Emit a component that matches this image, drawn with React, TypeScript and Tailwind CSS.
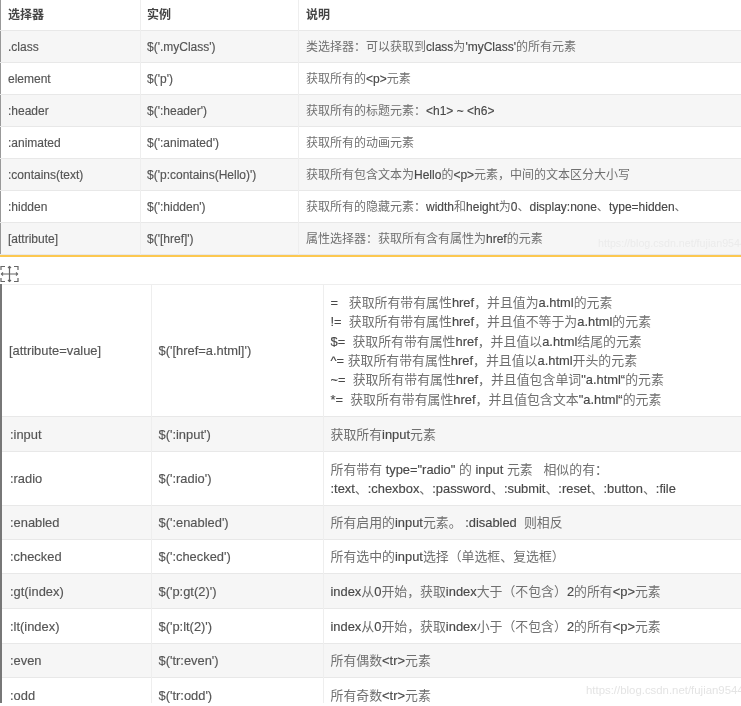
import React from 'react';

const font = "[font-family:'Liberation_Sans','Noto_Sans_CJK_SC',sans-serif]";

const topRows = [
    ['.class', "$('.myClass')", "类选择器：可以获取到class为'myClass'的所有元素"],
    ['element', "$('p')", '获取所有的<p>元素'],
    [':header', "$(':header')", '获取所有的标题元素：<h1> ~ <h6>'],
    [':animated', "$(':animated')", '获取所有的动画元素'],
    [':contains(text)', "$('p:contains(Hello)')", '获取所有包含文本为Hello的<p>元素，中间的文本区分大小写'],
    [':hidden', "$(':hidden')", '获取所有的隐藏元素：width和height为0、display:none、type=hidden、'],
    ['[attribute]', "$('[href]')", '属性选择器：获取所有含有属性为href的元素'],
];

const attrLines = [
    '=\u00a0\u00a0\u00a0获取所有带有属性href，并且值为a.html的元素',
    '!=\u00a0\u00a0获取所有带有属性href，并且值不等于为a.html的元素',
    '$=\u00a0\u00a0获取所有带有属性href，并且值以a.html结尾的元素',
    '^=\u00a0获取所有带有属性href，并且值以a.html开头的元素',
    '~=\u00a0\u00a0获取所有带有属性href，并且值包含单词"a.html“的元素',
    '*=\u00a0\u00a0获取所有带有属性href，并且值包含文本"a.html“的元素',
];

const bottomRows = [
    { h: 'h-[35px]', a: ':input', b: "$(':input')", c: ['获取所有input元素'] },
    { h: 'h-[54px]', a: ':radio', b: "$(':radio')", c: ['所有带有 type="radio" 的 input 元素\u00a0\u00a0\u00a0相似的有：', ':text、:chexbox、:password、:submit、:reset、:button、:file'] },
    { h: 'h-[34px]', a: ':enabled', b: "$(':enabled')", c: ['所有启用的input元素。\u00a0:disabled\u00a0\u00a0则相反'] },
    { h: 'h-[34px]', a: ':checked', b: "$(':checked')", c: ['所有选中的input选择（单选框、复选框）'] },
    { h: 'h-[35px]', a: ':gt(index)', b: "$('p:gt(2)')", c: ['index从0开始，获取index大于（不包含）2的所有<p>元素'] },
    { h: 'h-[35px]', a: ':lt(index)', b: "$('p:lt(2)')", c: ['index从0开始，获取index小于（不包含）2的所有<p>元素'] },
    { h: 'h-[34px]', a: ':even', b: "$('tr:even')", c: ['所有偶数<tr>元素'] },
    { h: 'h-[36px]', a: ':odd', b: "$('tr:odd')", c: ['所有奇数<tr>元素'] },
];

// latin runs are darker than the cjk ones in the picture
function Desc({ text }: { text: string }) {
    const parts = text.split(/([\u3000-\u303f\u4e00-\u9fff\uff00-\uffef]+)/);
    return (
        <>
            {parts.map((p, i) => (
                <span key={i} className={i % 2 === 1 ? 'text-[#707070]' : 'text-[#484848] [-webkit-text-stroke:0.15px_#484848]'}>{p}</span>
            ))}
        </>
    );
}

function MoveIcon() {
    return (
        <svg width="19" height="18" viewBox="0 0 19 18" fill="none" stroke="#666" strokeWidth="1.2">
            <path d="M1 5V1.500H5M14 1.500H18V5M1 13V16.500H5M14 16.500H18V13" />
            <path d="M9.500 1V17M1.500 9H17.500" />
            <path d="M8 3L9.500 1.500L11 3M8 15L9.500 16.500L11 15M3 7.500L1.500 9L3 10.500M16 7.500L17.500 9L16 10.500" />
        </svg>
    );
}

const codeCell = 'border-r border-[#eee] [-webkit-text-stroke:0.15px_#555]';

export default function App() {
    return (
        <div className={`relative w-[741px] h-[706px] overflow-hidden bg-white text-[12px] text-[#555] blur-[0.45px] ${font}`}>
            <table className="table-fixed border-collapse w-[741px] border-l border-[#999]">
                <colgroup>
                    <col className="w-[140px]" />
                    <col className="w-[158px]" />
                    <col />
                </colgroup>
                <thead>
                    <tr className="h-[30px] text-left text-[#444] border-b border-[#e8e8e8]">
                        <th className="pl-[7px] font-bold border-r border-[#eee]">选择器</th>
                        <th className="pl-[6px] font-bold border-r border-[#eee]">实例</th>
                        <th className="pl-[7px] font-bold">说明</th>
                    </tr>
                </thead>
                <tbody>
                    {topRows.map((r, i) => (
                        <tr key={r[0]} className={`h-[32px] border-b border-[#e8e8e8] ${i % 2 === 0 ? 'bg-[#f6f6f6]' : 'bg-white'}`}>
                            <td className={`pl-[7px] pt-px ${codeCell}`}>{r[0]}</td>
                            <td className={`pl-[6px] pt-px ${codeCell}`}>{r[1]}</td>
                            <td className="pl-[7px] pt-px"><Desc text={r[2]} /></td>
                        </tr>
                    ))}
                </tbody>
            </table>
            <div className="h-[2px] bg-[#fcc850]" />
            <div className="h-[27px] flex items-end pb-px"><MoveIcon /></div>
            <table className="table-fixed border-collapse w-[741px] text-[12.900px] border-l-2 border-[#777] border-t border-t-[#eee]">
                <colgroup>
                    <col className="w-[150px]" />
                    <col className="w-[172px]" />
                    <col />
                </colgroup>
                <tbody>
                    <tr className="h-[132px] border-b border-[#e8e8e8]">
                        <td className={`pl-[7px] pt-[2px] ${codeCell}`}>[attribute=value]</td>
                        <td className={`pl-[7px] pt-[2px] ${codeCell}`}>{"$('[href=a.html]')"}</td>
                        <td className="pl-[7px] pt-[2px] leading-[19.400px]">
                            {attrLines.map(l => <div key={l}><Desc text={l} /></div>)}
                        </td>
                    </tr>
                    {bottomRows.map((r, i) => (
                        <tr key={r.a} className={`${r.h} border-b border-[#e8e8e8] ${i % 2 === 0 ? 'bg-[#f6f6f6]' : 'bg-white'}`}>
                            <td className={`pl-[8px] pt-[2px] ${codeCell}`}>{r.a}</td>
                            <td className={`pl-[7px] pt-[2px] ${codeCell}`}>{r.b}</td>
                            <td className="pl-[7px] pt-[2px] leading-[19.400px]">
                                {r.c.map(l => <div key={l}><Desc text={l} /></div>)}
                            </td>
                        </tr>
                    ))}
                </tbody>
            </table>
            <div className="absolute left-0 right-0 top-[703px] h-[3px] bg-white" />
            <span className="absolute left-[598px] top-[235px] text-[10.700px] whitespace-nowrap text-[#ebebeb]">https://blog.csdn.net/fujian9544</span>
            <span className="absolute left-[586px] top-[682px] text-[11.400px] whitespace-nowrap text-[#e4e4e4]">https://blog.csdn.net/fujian9544</span>
        </div>
    );
}
